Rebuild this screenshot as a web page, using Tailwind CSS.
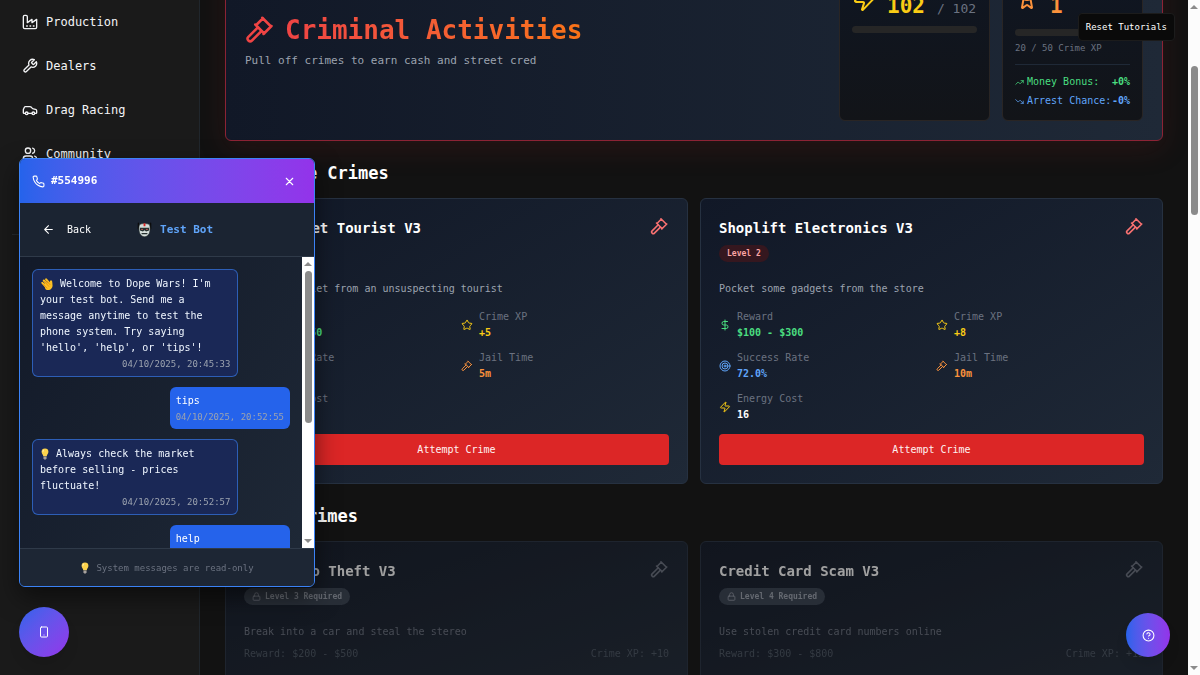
<!DOCTYPE html>
<html lang="en">

<head>
    <meta charset="UTF-8">
    <meta name="viewport" content="width=device-width, initial-scale=1.0">
    <title>Dope Wars - Crimes</title>
    <script src="https://cdn.jsdelivr.net/npm/@tailwindcss/browser@4"></script>
</head>

<body class="h-screen overflow-hidden bg-[#121212] text-white text-[10px] leading-4 font-['DejaVu_Sans_Mono',monospace]">

    <!-- icon set -->
    <svg class="hidden" aria-hidden="true">
        <symbol id="factory" viewBox="0 0 24 24"><path d="M2 20a2 2 0 0 0 2 2h16a2 2 0 0 0 2-2V8l-7 5V8l-7 5V4a2 2 0 0 0-2-2H4a2 2 0 0 0-2 2Z" /><path d="M17 18h1M12 18h1M7 18h1" /></symbol>
        <symbol id="wrench" viewBox="0 0 24 24"><path d="M14.7 6.3a1 1 0 0 0 0 1.4l1.6 1.6a1 1 0 0 0 1.4 0l3.77-3.77a6 6 0 0 1-7.94 7.94l-6.91 6.91a2.12 2.12 0 0 1-3-3l6.91-6.91a6 6 0 0 1 7.94-7.94l-3.76 3.76z" /></symbol>
        <symbol id="car" viewBox="0 0 24 24"><path d="M19 17h2c.6 0 1-.4 1-1v-3c0-.9-.7-1.7-1.5-1.9C18.7 10.6 16 10 16 10s-1.3-1.4-2.2-2.3c-.5-.4-1.1-.7-1.8-.7H5c-.6 0-1.1.4-1.4.9l-1.4 2.9A3.7 3.7 0 0 0 2 12v4c0 .6.4 1 1 1h2" /><circle cx="7" cy="17" r="2" /><path d="M9 17h6" /><circle cx="17" cy="17" r="2" /></symbol>
        <symbol id="users" viewBox="0 0 24 24"><path d="M16 21v-2a4 4 0 0 0-4-4H6a4 4 0 0 0-4 4v2" /><circle cx="9" cy="7" r="4" /><path d="M22 21v-2a4 4 0 0 0-3-3.87M16 3.13a4 4 0 0 1 0 7.75" /></symbol>
        <symbol id="gavel" viewBox="0 0 24 24"><path d="m13.200 12.800-7.600 7.600a1.900 1.900 0 0 1-2.900-2.900l7.700-7.700" /><path d="m14.800 15.200 6.400-6.400M20.800 9.200l-7-7M8.800 8.200l5.600-5.600M8.200 7.600l7.200 7.200" /></symbol>
        <symbol id="zap" viewBox="0 0 24 24"><path d="M4 14a1 1 0 0 1-.78-1.63l9.9-10.2a.5.5 0 0 1 .86.46l-1.92 6.02A1 1 0 0 0 13 10h7a1 1 0 0 1 .78 1.63l-9.9 10.2a.5.5 0 0 1-.86-.46l1.92-6.02A1 1 0 0 0 11 14z" /></symbol>
        <symbol id="award" viewBox="0 0 24 24"><path d="m15.477 12.89 1.515 8.526a.5.5 0 0 1-.81.47l-3.58-2.687a1 1 0 0 0-1.197 0l-3.586 2.686a.5.5 0 0 1-.81-.469l1.514-8.526" /><circle cx="12" cy="8" r="6" /></symbol>
        <symbol id="trend-up" viewBox="0 0 24 24"><path d="M22 7 13.5 15.5l-5-5L2 17" /><path d="M16 7h6v6" /></symbol>
        <symbol id="trend-down" viewBox="0 0 24 24"><path d="m22 17-8.500-8.500-5 5L2 7" /><path d="M16 17h6v-6" /></symbol>
        <symbol id="dollar" viewBox="0 0 24 24"><path d="M12 2v20M17 5H9.500a3.500 3.500 0 0 0 0 7h5a3.500 3.500 0 0 1 0 7H6" /></symbol>
        <symbol id="star" viewBox="0 0 24 24"><path d="M11.525 2.295a.53.53 0 0 1 .95 0l2.310 4.679a2.123 2.123 0 0 0 1.595 1.160l5.166.756a.53.53 0 0 1 .294.904l-3.736 3.638a2.123 2.123 0 0 0-.611 1.878l.882 5.140a.53.53 0 0 1-.771.560l-4.618-2.428a2.122 2.122 0 0 0-1.973 0L6.396 21.010a.53.53 0 0 1-.770-.560l.881-5.139a2.122 2.122 0 0 0-.611-1.879L2.160 9.795a.53.53 0 0 1 .294-.906l5.165-.755a2.122 2.122 0 0 0 1.597-1.160z" /></symbol>
        <symbol id="target" viewBox="0 0 24 24"><circle cx="12" cy="12" r="10" /><circle cx="12" cy="12" r="6" /><circle cx="12" cy="12" r="2" /></symbol>
        <symbol id="lock" viewBox="0 0 24 24"><rect x="3" y="11" width="18" height="11" rx="2" /><path d="M7 11V7a5 5 0 0 1 10 0v4" /></symbol>
        <symbol id="phone" viewBox="0 0 24 24"><path d="M22 16.920v3a2 2 0 0 1-2.180 2 19.790 19.790 0 0 1-8.630-3.070 19.500 19.500 0 0 1-6-6 19.790 19.790 0 0 1-3.070-8.670A2 2 0 0 1 4.110 2h3a2 2 0 0 1 2 1.720 12.840 12.840 0 0 0 .7 2.810 2 2 0 0 1-.45 2.110L8.090 9.910a16 16 0 0 0 6 6l1.270-1.270a2 2 0 0 1 2.110-.45 12.840 12.840 0 0 0 2.810.7A2 2 0 0 1 22 16.920z" /></symbol>
        <symbol id="close" viewBox="0 0 24 24"><path d="M18 6 6 18M6 6l12 12" /></symbol>
        <symbol id="back" viewBox="0 0 24 24"><path d="m12 19-7-7 7-7M19 12H5" /></symbol>
        <symbol id="mobile" viewBox="0 0 24 24"><rect x="5" y="2" width="14" height="20" rx="2" /><path d="M12 18h.01" /></symbol>
        <symbol id="help" viewBox="0 0 24 24"><circle cx="12" cy="12" r="10" /><path d="M9.090 9a3 3 0 0 1 5.830 1c0 2-3 3-3 3M12 17h.01" /></symbol>
        <symbol id="bulb" viewBox="0 0 10 14"><path fill="#fcd34d" stroke="none" d="M5 .5a4 4 0 0 0-4 4c0 2.200 1.700 3 2 5h4c.3-2 2-2.800 2-5a4 4 0 0 0-4-4Z" /><path fill="#fff3c4" stroke="none" d="M3.600 1.800c-1.300.6-1.700 2-1.300 3.200.8-.4 1.500-1.900 1.300-3.200Z" /><path fill="#a8a29e" stroke="none" d="M3.200 10h3.600v2L6 13.500H4L3.200 12Z" /></symbol>
        <symbol id="wave" viewBox="0 0 24 24"><g fill="#fbbf24" stroke="#fbbf24" stroke-width="3.600"><path d="m4 10 8 9M6.500 6l8 9M10.500 4l6.500 8" /><path d="M19 7.500c.5 4 1.500 7 .2 9.500-2 4-6 4.500-8.500 2.500L9 12l8 1Z" /></g><path stroke="#d97706" stroke-width="1" d="m8 8 7 8M6 13l6 6M12 7l5 6" /></symbol>
        <symbol id="robot" viewBox="0 0 24 26"><path stroke="#0b0b0b" stroke-width="2" d="M2 2v9M22 2v9" /><path fill="#d5dedb" stroke="#26302f" stroke-width="1" d="M4 4C8 2 16 2 20 4c1.500 3 1.500 9.500 0 14-1.500 4-5 6-8 6s-6.500-2-8-6C2.500 13.500 2.500 7 4 4Z" /><path fill="#dc2626" stroke="none" d="M10.500 2h3v5h-3z" /><path fill="#26302f" stroke="none" d="M4.500 9.500h15V14l-5 1.500L12 13.500l-2.500 2-5-1.500z" /><circle cx="8" cy="12" r="1.200" fill="#ef6461" stroke="none" /><circle cx="16" cy="12" r="1.200" fill="#ef6461" stroke="none" /><path stroke="#26302f" stroke-width="2" d="M8 19h8" /></symbol>
    </svg>

    <div class="flex h-full fill-none stroke-2 [stroke-linecap:round] [stroke-linejoin:round]">

        <aside class="w-[200px] shrink-0 bg-[#1a1a1a] border-r border-[#20262c] px-3 text-[12px] text-gray-100">
            <nav class="px-[10px]">
                <a href="#" class="flex items-center gap-2 h-11"><svg class="size-4 stroke-current"><use href="#factory" /></svg>Production</a>
                <a href="#" class="flex items-center gap-2 h-11"><svg class="size-4 stroke-current"><use href="#wrench" /></svg>Dealers</a>
                <a href="#" class="flex items-center gap-2 h-11"><svg class="size-4 stroke-current"><use href="#car" /></svg>Drag Racing</a>
                <a href="#" class="flex items-center gap-2 h-11"><svg class="size-4 stroke-current"><use href="#users" /></svg>Community</a>
            </nav>
            <hr class="mt-[58px] border-[#262b30]">
        </aside>

        <main class="flex-1 min-w-0 overflow-hidden px-[25px]">

            <!-- banner, scrolled partly out of view -->
            <header
                class="-mt-[59px] h-[200px] flex items-center justify-between rounded-md border border-[#8c2335] bg-linear-to-r from-[#111827] to-[#1f2937] p-[19px] shadow-[0_8px_28px_rgba(127,29,29,0.2)]">
                <div>
                    <h1 class="flex items-center gap-[10px] text-[26px] leading-9 font-bold text-[#ef4444]">
                        <svg class="size-[30px] stroke-current"><use href="#gavel" /></svg>
                        <span class="bg-linear-to-r from-[#ef4444] to-[#f97316] bg-clip-text text-transparent">Criminal Activities</span>
                    </h1>
                    <p class="mt-1 text-[11px] leading-[18px] text-[#9ca3af]">Pull off crimes to earn cash and street cred</p>
                </div>
                <div class="flex self-stretch gap-3">
                    <div class="w-[151px] rounded-md border border-[#292524] bg-linear-to-b from-[#0f1623] to-[#121418] p-3">
                        <div class="mt-1 flex items-center gap-[11px] text-[#facc15]">
                            <svg class="size-6 stroke-current"><use href="#zap" /></svg>
                            <div>
                                <div class="text-[#9ca3af]">Energy</div>
                                <div class="text-[21px] leading-6 font-bold whitespace-nowrap">102<span class="ml-3 text-[13px] font-normal text-[#6b7280]">/ 102</span></div>
                            </div>
                        </div>
                        <div class="mt-[5px] h-[7px] rounded-full bg-[#262626]"></div>
                    </div>
                    <div class="w-[141px] rounded-md border border-[#292524] bg-linear-to-b from-[#0f1623] to-[#121418] p-3">
                        <div class="mt-1 flex items-center gap-[11px] text-[#fb923c]">
                            <svg class="size-6 stroke-current"><use href="#award" /></svg>
                            <div>
                                <div class="text-[#9ca3af]">Level</div>
                                <div class="text-[21px] leading-6 font-bold">1</div>
                            </div>
                        </div>
                        <div class="mt-[11px] h-[7px] rounded-full bg-[#262626]"></div>
                        <div class="mt-1 text-[9px] text-[#6b7280]">20 / 50 Crime XP</div>
                        <div class="mt-2 border-t border-[#1f2937] pt-[9px] flex justify-between text-[#4ade80]">
                            <span class="flex items-center gap-[3px]"><svg class="size-[9px] stroke-current"><use href="#trend-up" /></svg>Money Bonus:</span>
                            <b>+0%</b>
                        </div>
                        <div class="mt-[3px] flex justify-between text-[#60a5fa]">
                            <span class="flex items-center gap-[3px]"><svg class="size-[9px] stroke-current"><use href="#trend-down" /></svg>Arrest Chance:</span>
                            <b>-0%</b>
                        </div>
                    </div>
                </div>
            </header>

            <section class="mt-[19px]">
                <h2 class="text-[17px] leading-[26px] font-bold">Available Crimes</h2>
                <div class="mt-3 grid grid-cols-2 gap-3">

                    <article class="rounded-md border border-[#263141] bg-linear-to-br from-[#111827] to-[#1f2937] p-[18px]">
                        <div class="flex justify-between h-[45px]">
                            <h3 class="text-[14px] leading-[22px] font-bold">Pickpocket Tourist V3</h3>
                            <svg class="size-[19px] stroke-[#f87171]"><use href="#gavel" /></svg>
                        </div>
                        <p class="mt-[19px] text-[#9ca3af]">Steal a wallet from an unsuspecting tourist</p>
                        <dl class="mt-3 grid grid-cols-2 gap-[9px] text-[#6b7280]">
                            <div class="flex items-center gap-1.5">
                                <svg class="size-3 stroke-[#4ade80]"><use href="#dollar" /></svg>
                                <div><dt>Reward</dt><dd class="font-bold text-[#4ade80]">$50 - $150</dd></div>
                            </div>
                            <div class="flex items-center gap-1.5">
                                <svg class="size-3 stroke-[#facc15]"><use href="#star" /></svg>
                                <div><dt>Crime XP</dt><dd class="font-bold text-[#facc15]">+5</dd></div>
                            </div>
                            <div class="flex items-center gap-1.5">
                                <svg class="size-3 stroke-[#60a5fa]"><use href="#target" /></svg>
                                <div><dt>Success Rate</dt><dd class="font-bold text-[#60a5fa]">82.0%</dd></div>
                            </div>
                            <div class="flex items-center gap-1.5">
                                <svg class="size-3 stroke-[#fb923c]"><use href="#gavel" /></svg>
                                <div><dt>Jail Time</dt><dd class="font-bold text-[#fb923c]">5m</dd></div>
                            </div>
                            <div class="flex items-center gap-1.5">
                                <svg class="size-3 stroke-[#facc15]"><use href="#zap" /></svg>
                                <div><dt>Energy Cost</dt><dd class="font-bold text-white">10</dd></div>
                            </div>
                        </dl>
                        <button class="mt-[11px] w-full h-[31px] rounded bg-[#dc2626] hover:bg-[#b91c1c] text-[#fef2f2]">Attempt Crime</button>
                    </article>

                    <article class="rounded-md border border-[#263141] bg-linear-to-br from-[#111827] to-[#1f2937] p-[18px]">
                        <div class="flex justify-between h-[45px]">
                            <div>
                                <h3 class="text-[14px] leading-[22px] font-bold">Shoplift Electronics V3</h3>
                                <span class="mt-1.5 block w-max rounded-full bg-[#35171f] px-2 text-[8px] leading-[17px] font-bold text-[#fca5a5]">Level 2</span>
                            </div>
                            <svg class="size-[19px] stroke-[#f87171]"><use href="#gavel" /></svg>
                        </div>
                        <p class="mt-[19px] text-[#9ca3af]">Pocket some gadgets from the store</p>
                        <dl class="mt-3 grid grid-cols-2 gap-[9px] text-[#6b7280]">
                            <div class="flex items-center gap-1.5">
                                <svg class="size-3 stroke-[#4ade80]"><use href="#dollar" /></svg>
                                <div><dt>Reward</dt><dd class="font-bold text-[#4ade80]">$100 - $300</dd></div>
                            </div>
                            <div class="flex items-center gap-1.5">
                                <svg class="size-3 stroke-[#facc15]"><use href="#star" /></svg>
                                <div><dt>Crime XP</dt><dd class="font-bold text-[#facc15]">+8</dd></div>
                            </div>
                            <div class="flex items-center gap-1.5">
                                <svg class="size-3 stroke-[#60a5fa]"><use href="#target" /></svg>
                                <div><dt>Success Rate</dt><dd class="font-bold text-[#60a5fa]">72.0%</dd></div>
                            </div>
                            <div class="flex items-center gap-1.5">
                                <svg class="size-3 stroke-[#fb923c]"><use href="#gavel" /></svg>
                                <div><dt>Jail Time</dt><dd class="font-bold text-[#fb923c]">10m</dd></div>
                            </div>
                            <div class="flex items-center gap-1.5">
                                <svg class="size-3 stroke-[#facc15]"><use href="#zap" /></svg>
                                <div><dt>Energy Cost</dt><dd class="font-bold text-white">16</dd></div>
                            </div>
                        </dl>
                        <button class="mt-[11px] w-full h-[31px] rounded bg-[#dc2626] hover:bg-[#b91c1c] text-[#fef2f2]">Attempt Crime</button>
                    </article>
                </div>
            </section>

            <section class="mt-[19px]">
                <h2 class="text-[17px] leading-[26px] font-bold">Locked Crimes</h2>
                <div class="mt-3 grid grid-cols-2 gap-3">

                    <article class="rounded-md border border-[#263141] bg-linear-to-br from-[#111827] to-[#1f2937] p-[18px] pb-10 opacity-60">
                        <div class="flex justify-between h-[45px]">
                            <div>
                                <h3 class="text-[14px] leading-[22px] font-bold">Car Radio Theft V3</h3>
                                <span class="mt-1.5 flex w-max items-center gap-1 rounded-full bg-[#374151] px-2 text-[8px] leading-[17px] font-bold text-[#9ca3af]"><svg class="size-[9px] stroke-current"><use href="#lock" /></svg>Level 3 Required</span>
                            </div>
                            <svg class="size-[19px] stroke-[#6b7280]"><use href="#gavel" /></svg>
                        </div>
                        <p class="mt-[19px] text-[#6b7280]">Break into a car and steal the stereo</p>
                        <div class="mt-1.5 flex justify-between text-[#4b5563]"><span>Reward: $200 - $500</span><span>Crime XP: +10</span></div>
                    </article>

                    <article class="rounded-md border border-[#263141] bg-linear-to-br from-[#111827] to-[#1f2937] p-[18px] pb-10 opacity-60">
                        <div class="flex justify-between h-[45px]">
                            <div>
                                <h3 class="text-[14px] leading-[22px] font-bold">Credit Card Scam V3</h3>
                                <span class="mt-1.5 flex w-max items-center gap-1 rounded-full bg-[#374151] px-2 text-[8px] leading-[17px] font-bold text-[#9ca3af]"><svg class="size-[9px] stroke-current"><use href="#lock" /></svg>Level 4 Required</span>
                            </div>
                            <svg class="size-[19px] stroke-[#6b7280]"><use href="#gavel" /></svg>
                        </div>
                        <p class="mt-[19px] text-[#6b7280]">Use stolen credit card numbers online</p>
                        <div class="mt-1.5 flex justify-between text-[#4b5563]"><span>Reward: $300 - $800</span><span>Crime XP: +15</span></div>
                    </article>
                </div>
            </section>
        </main>

        <!-- page scrollbar -->
        <div class="w-3 shrink-0 flex flex-col items-center bg-[#fcfcfc] py-[5px]" aria-hidden="true">
            <div class="border-x-4 border-b-4 border-x-transparent border-b-[#8b8b8b]"></div>
            <div class="mt-[57px] h-[149px] w-[7px] rounded-full bg-[#8b8b8b]"></div>
            <div class="mt-auto border-x-4 border-t-4 border-x-transparent border-t-[#8b8b8b]"></div>
        </div>

        <!-- phone -->
        <div class="fixed left-[19px] bottom-[88px] flex h-[429px] w-[296px] flex-col overflow-hidden rounded-md border border-[#3b82f6] bg-linear-to-br from-[#111827] to-[#1f2937] shadow-[0_10px_24px_rgba(0,0,0,0.5)]">
            <div class="flex h-11 shrink-0 items-center bg-linear-to-r from-[#2563eb] to-[#9333ea] px-3">
                <svg class="size-[13px] stroke-current"><use href="#phone" /></svg>
                <b class="ml-1.5 text-[11px]">#554996</b>
                <button class="ml-auto mr-1.5" aria-label="Close"><svg class="size-[13px] stroke-current"><use href="#close" /></svg></button>
            </div>
            <div class="flex h-[54px] shrink-0 items-center border-b border-[#2f3a49] bg-[#1b2432] px-[22px]">
                <button class="flex items-center gap-3"><svg class="size-[13px] stroke-current"><use href="#back" /></svg>Back</button>
                <svg class="ml-[46px] h-4 w-[15px]"><use href="#robot" /></svg>
                <b class="ml-2 text-[11px] text-[#60a5fa]">Test Bot</b>
            </div>
            <div class="flex min-h-0 flex-1">
                <div class="flex flex-1 flex-col gap-[10px] overflow-hidden p-3">
                    <div class="max-w-[80%] shrink-0 self-start rounded-md border border-[#3b82f6]/60 bg-[#1a2856] px-[7px] py-1.5 text-[#eff6ff]">
                        <p><svg class="mr-1.5 inline size-3.5"><use href="#wave" /></svg>Welcome to Dope Wars! I'm your test bot. Send me a message anytime to test the phone system. Try saying 'hello', 'help', or 'tips'!</p>
                        <time class="mt-0.5 block text-right text-[9px] leading-3 text-[#9ca3af]">04/10/2025, 20:45:33</time>
                    </div>
                    <div class="max-w-[80%] shrink-0 self-end rounded-md bg-[#2563eb] p-1.5">
                        <p>tips</p>
                        <time class="mt-0.5 block text-[9px] leading-3 text-[#9ca3af]">04/10/2025, 20:52:55</time>
                    </div>
                    <div class="w-[80%] shrink-0 self-start rounded-md border border-[#3b82f6]/60 bg-[#1a2856] px-[7px] py-1.5 text-[#eff6ff]">
                        <p><svg class="mr-1.5 inline h-3 w-[10px]"><use href="#bulb" /></svg>Always check the market before selling - prices fluctuate!</p>
                        <time class="mt-0.5 block text-right text-[9px] leading-3 text-[#9ca3af]">04/10/2025, 20:52:57</time>
                    </div>
                    <div class="max-w-[80%] shrink-0 self-end rounded-md bg-[#2563eb] p-1.5">
                        <p>help</p>
                        <time class="mt-0.5 block text-[9px] leading-3 text-[#9ca3af]">04/10/2025, 20:53:02</time>
                    </div>
                </div>
                <div class="w-3 shrink-0 flex flex-col items-center bg-white py-[5px]" aria-hidden="true">
                    <div class="border-x-4 border-b-4 border-x-transparent border-b-[#8b8b8b]"></div>
                    <div class="mt-[5px] h-[152px] w-[7px] rounded-full bg-[#8b8b8b]"></div>
                    <div class="mt-auto border-x-4 border-t-4 border-x-transparent border-t-[#8b8b8b]"></div>
                </div>
            </div>
            <div class="flex h-[38px] shrink-0 items-center justify-center gap-1.5 border-t border-[#2f3a49] bg-[#1d2634] text-[9px] text-[#6b7280]">
                <svg class="h-3 w-[10px]"><use href="#bulb" /></svg>System messages are read-only
            </div>
        </div>

        <button class="fixed left-[19px] bottom-[18px] flex size-[50px] items-center justify-center rounded-full bg-linear-to-br from-[#2563eb] to-[#9333ea] shadow-lg" aria-label="Phone">
            <svg class="size-3 stroke-current"><use href="#mobile" /></svg>
        </button>

        <button class="fixed right-[30px] bottom-[18px] flex size-[44px] items-center justify-center rounded-full bg-linear-to-r from-[#2563eb] to-[#9333ea] shadow-lg" aria-label="Help">
            <svg class="size-[13px] stroke-current"><use href="#help" /></svg>
        </button>

        <button class="fixed right-[25px] top-[13px] h-7 rounded border border-[#1c1c1c] bg-[#0a0a0a] px-[7px] text-[9px]">Reset Tutorials</button>
    </div>

</body>

</html>
